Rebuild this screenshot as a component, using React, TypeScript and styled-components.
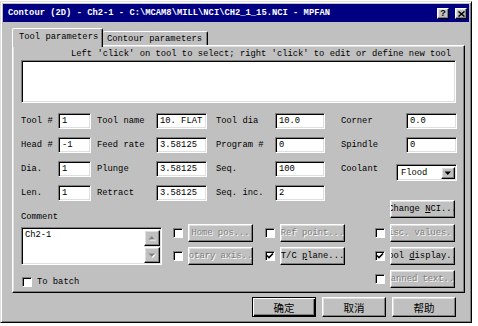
import React from 'react';
import styled, { createGlobalStyle, css } from 'styled-components';

const FACE = '#c0c0c0';
const MONO = `"Liberation Mono", "Courier New", monospace`;
const CJK = `"Noto Sans CJK SC", "Noto Sans", sans-serif`;

const GlobalStyle = createGlobalStyle`
  html, body { margin: 0; padding: 0; background: #fff; }
  body { font-family: ${MONO}; font-size: 8.8px; color: #000; }
  * { box-sizing: border-box; }
`;

const raised = css`
  background: ${FACE};
  border: 1px solid;
  border-color: #fff #000 #000 #fff;
  box-shadow: inset -1px -1px 0 #808080, inset 1px 1px 0 #dfdfdf;
`;

const sunken = css`
  background: #fff;
  border: 1px solid;
  border-color: #808080 #fff #fff #808080;
  box-shadow: inset 1px 1px 0 #000, inset -1px -1px 0 #dfdfdf;
`;

const Window = styled.div`
  margin-top: 1px;
  width: 472px;
  height: 322px;
  background: ${FACE};
  border: 1px solid;
  border-color: #dfdfdf #000 #000 #dfdfdf;
  box-shadow: inset 1px 1px 0 #fff, inset -1px -1px 0 #808080;
  padding: 2px;
  display: flex;
  flex-direction: column;
`;

const TitleBar = styled.div`
  height: 18px;
  background: #000080;
  color: #fff;
  font-weight: bold;
  display: flex;
  align-items: center;
  justify-content: space-between;
  padding: 0 2px 0 5px;
`;

const TitleText = styled.span`
  white-space: nowrap;
  line-height: 12px;
`;

const CaptionButtons = styled.div`
  display: flex;
  gap: 6px;
  margin-top: 1px;
`;

const CaptionButton = styled.div`
  ${raised};
  width: 12px;
  height: 11px;
  display: flex;
  align-items: center;
  justify-content: center;
  color: #000;
  font-family: "Liberation Sans", sans-serif;
  font-size: 9px;
  font-weight: bold;
  line-height: 9px;
`;

const TabStrip = styled.div`
  margin-top: 6px;
  height: 17px;
  padding-left: 9px;
  display: flex;
  align-items: flex-end;
  position: relative;
  z-index: 1;
`;

const Tab = styled.div<{ $active?: boolean }>`
  background: ${FACE};
  border-top: 1px solid #fff;
  border-left: 1px solid #fff;
  border-right: 1px solid #000;
  box-shadow: inset -1px 0 0 #808080;
  border-radius: 2px 2px 0 0;
  white-space: nowrap;
  line-height: 12px;
  ${(p) =>
    p.$active
      ? css`
          height: 19px;
          margin-bottom: -2px;
          width: 91px;
          padding: 2px 0 0 6px;
        `
      : css`
          height: 14px;
          width: 105px;
          padding: 1px 0 0 4px;
          border-left: none;
        `}
`;

const Panel = styled.div`
  margin-left: 9px;
  width: 453px;
  height: 248px;
  background: ${FACE};
  border: 1px solid;
  border-color: #fff #000 #000 #fff;
  box-shadow: inset -1px -1px 0 #808080, inset 1px 1px 0 #dfdfdf;
  padding: 3px 0 0 8px;
  display: flex;
  flex-direction: column;
`;

const Hint = styled.div`
  line-height: 11px;
  height: 11px;
  padding-left: 50px;
  white-space: nowrap;
`;

const ToolList = styled.div`
  ${sunken};
  width: 435px;
  height: 43px;
`;

const Fields = styled.div`
  margin-top: 10px;
  display: flex;
  flex-direction: column;
  gap: 8px;
`;

const FieldRow = styled.div`
  display: flex;
  height: 16px;
`;

const Field = styled.div<{ $w: number; $indent: number }>`
  width: ${(p) => p.$w}px;
  padding-left: ${(p) => p.$indent}px;
  display: flex;
  align-items: flex-start;
  justify-content: space-between;
`;

const Label = styled.span`
  line-height: 16px;
  white-space: nowrap;
`;

const Input = styled.div<{ $w: number }>`
  ${sunken};
  width: ${(p) => p.$w}px;
  height: 16px;
  padding: 1px 0 0 3px;
  line-height: 13px;
  white-space: nowrap;
  overflow: hidden;
`;

const Select = styled.div`
  ${sunken};
  width: 61px;
  height: 17px;
  margin-top: 3px;
  display: flex;
  align-items: stretch;
  padding: 2px 1px 1px 2px;
`;

const SelectValue = styled.span`
  flex: 1;
  line-height: 12px;
  padding-left: 2px;
`;

const DropButton = styled.div`
  ${raised};
  width: 14px;
  display: flex;
  align-items: center;
  justify-content: center;
`;

const Lower = styled.div`
  margin-top: -2px;
  display: grid;
  grid-template-columns: 141px 91px 92px 110px;
  grid-template-rows: 20px 18px 18px 18px;
  row-gap: 5px;
`;

const CommentBlock = styled.div`
  grid-row: 1 / span 3;
  grid-column: 1;
  display: flex;
  flex-direction: column;
  justify-content: flex-end;
  gap: 4px;
`;

const CommentLabel = styled.span`
  line-height: 11px;
`;

const CommentBox = styled.div`
  ${sunken};
  height: 38px;
  display: flex;
  padding: 2px 1px 1px 2px;
`;

const CommentText = styled.div`
  flex: 1;
  line-height: 11px;
  padding-left: 1px;
`;

const ScrollBar = styled.div`
  width: 16px;
  display: flex;
  flex-direction: column;
  justify-content: space-between;
  background: #e0e0e0;
`;

const ScrollButton = styled.div`
  ${raised};
  height: 16px;
  display: flex;
  align-items: center;
  justify-content: center;
`;

const CheckGroup = styled.div<{ $col: number; $row: number }>`
  grid-column: ${(p) => p.$col};
  grid-row: ${(p) => p.$row};
  display: flex;
  align-items: center;
  justify-content: flex-end;
  gap: 5px;
`;

const BatchRow = styled.div`
  grid-column: 1;
  grid-row: 4;
  display: flex;
  align-items: center;
  gap: 5px;
  padding: 5px 0 0 1px;
`;

const CheckBox = styled.div`
  width: 10px;
  height: 10px;
  background: #fff;
  border: 1px solid;
  border-color: #808080 #fff #fff #808080;
  box-shadow: inset 1px 1px 0 #000;
  display: flex;
  align-items: center;
  justify-content: center;
`;

const Button = styled.button<{ $w: number; $h?: number; $disabled?: boolean }>`
  ${raised};
  width: ${(p) => p.$w}px;
  height: ${(p) => p.$h ?? 18}px;
  padding: 0;
  margin: 0;
  display: flex;
  align-items: center;
  justify-content: center;
  overflow: hidden;
  white-space: nowrap;
  font-family: ${MONO};
  font-size: 8.8px;
  color: ${(p) => (p.$disabled ? '#808080' : '#000')};
  text-shadow: ${(p) => (p.$disabled ? '1px 1px 0 #fff' : 'none')};
  cursor: default;
`;

const Footer = styled.div`
  margin-top: 4px;
  display: flex;
  justify-content: flex-end;
  gap: 6px;
  padding-right: 13px;
`;

const DialogButton = styled.button<{ $default?: boolean }>`
  width: 64px;
  height: 20px;
  padding: 0;
  margin: 0;
  background: ${FACE};
  font-family: ${CJK};
  font-size: 10.5px;
  color: #000;
  display: flex;
  align-items: center;
  justify-content: center;
  ${(p) =>
    p.$default
      ? css`
          border: 1px solid #000;
          box-shadow: inset 1px 1px 0 #fff, inset -1px -1px 0 #000, inset -2px -2px 0 #808080;
        `
      : css`
          border: 1px solid;
          border-color: #fff #000 #000 #fff;
          box-shadow: inset -1px -1px 0 #808080, inset 1px 1px 0 #dfdfdf;
        `}
`;

const U = styled.span`
  text-decoration: underline;
`;

const Check = () => (
  <svg width="8" height="8" viewBox="0 0 8 8">
    <path d="M1 3.5 L3 5.5 L7 1.5" stroke="#000" strokeWidth="1.6" fill="none" />
  </svg>
);

const Arrow = ({ dir, color = '#000', shadow }: { dir: 'up' | 'down'; color?: string; shadow?: boolean }) => (
  <svg width="8" height="5" viewBox="0 0 8 5">
    {shadow && (
      <polygon
        points={dir === 'down' ? '1.5,1.5 8,1.5 4.75,5' : '4.75,1 8,4.5 1.5,4.5'}
        fill="#fff"
      />
    )}
    <polygon points={dir === 'down' ? '0.5,0.5 7,0.5 3.75,4' : '3.75,0 7,3.5 0.5,3.5'} fill={color} />
  </svg>
);

type FieldDef = { label: string; value?: string; w: number; iw: number; indent: number; select?: boolean };

const rows: FieldDef[][] = [
  [
    { label: 'Tool #', value: '1', w: 70, iw: 33, indent: 0 },
    { label: 'Tool name', value: '10. FLAT', w: 116, iw: 51, indent: 6 },
    { label: 'Tool dia', value: '10.0', w: 118, iw: 50, indent: 9 },
    { label: 'Corner', value: '0.0', w: 132, iw: 51, indent: 16 },
  ],
  [
    { label: 'Head #', value: '-1', w: 70, iw: 33, indent: 0 },
    { label: 'Feed rate', value: '3.58125', w: 116, iw: 51, indent: 6 },
    { label: 'Program #', value: '0', w: 118, iw: 50, indent: 9 },
    { label: 'Spindle', value: '0', w: 132, iw: 51, indent: 16 },
  ],
  [
    { label: 'Dia.', value: '1', w: 70, iw: 33, indent: 0 },
    { label: 'Plunge', value: '3.58125', w: 116, iw: 51, indent: 6 },
    { label: 'Seq.', value: '100', w: 118, iw: 50, indent: 9 },
    { label: 'Coolant', value: 'Flood', w: 132, iw: 61, indent: 16, select: true },
  ],
  [
    { label: 'Len.', value: '1', w: 70, iw: 33, indent: 0 },
    { label: 'Retract', value: '3.58125', w: 116, iw: 51, indent: 6 },
    { label: 'Seq. inc.', value: '2', w: 118, iw: 50, indent: 9 },
  ],
];

type CB = { text: React.ReactNode; checked?: boolean; disabled?: boolean; col: number; row: number };

const checkButtons: CB[] = [
  { text: 'Home pos...', disabled: true, col: 2, row: 2 },
  { text: 'Ref point...', disabled: true, col: 3, row: 2 },
  { text: 'Misc. values...', disabled: true, col: 4, row: 2 },
  { text: 'Rotary axis...', disabled: true, col: 2, row: 3 },
  { text: <>T/C <U>p</U>lane...</>, checked: true, col: 3, row: 3 },
  { text: <>Tool <U>d</U>isplay...</>, checked: true, col: 4, row: 3 },
  { text: 'Canned text...', disabled: true, col: 4, row: 4 },
];

export default function App() {
  return (
    <>
      <GlobalStyle />
      <Window>
        <TitleBar>
          <TitleText>{'Contour (2D) - Ch2-1 - C:\\MCAM8\\MILL\\NCI\\CH2_1_15.NCI - MPFAN'}</TitleText>
          <CaptionButtons>
            <CaptionButton>?</CaptionButton>
            <CaptionButton>
              <svg width="7" height="6" viewBox="0 0 7 6">
                <path d="M0.5 0.5 L6.5 5.5 M6.5 0.5 L0.5 5.5" stroke="#000" strokeWidth="1.5" />
              </svg>
            </CaptionButton>
          </CaptionButtons>
        </TitleBar>

        <TabStrip>
          <Tab $active>Tool parameters</Tab>
          <Tab>Contour parameters</Tab>
        </TabStrip>

        <Panel>
          <Hint>Left 'click' on tool to select; right 'click' to edit or define new tool</Hint>
          <ToolList />

          <Fields>
            {rows.map((r, i) => (
              <FieldRow key={i}>
                {r.map((f) => (
                  <Field key={f.label} $w={f.w} $indent={f.indent}>
                    <Label>{f.label}</Label>
                    {f.select ? (
                      <Select>
                        <SelectValue>{f.value}</SelectValue>
                        <DropButton>
                          <Arrow dir="down" />
                        </DropButton>
                      </Select>
                    ) : (
                      <Input $w={f.iw}>{f.value}</Input>
                    )}
                  </Field>
                ))}
              </FieldRow>
            ))}
          </Fields>

          <Lower>
            <CommentBlock>
              <CommentLabel>Comment</CommentLabel>
              <CommentBox>
                <CommentText>Ch2-1</CommentText>
                <ScrollBar>
                  <ScrollButton>
                    <Arrow dir="up" color="#808080" shadow />
                  </ScrollButton>
                  <ScrollButton>
                    <Arrow dir="down" color="#808080" shadow />
                  </ScrollButton>
                </ScrollBar>
              </CommentBox>
            </CommentBlock>

            <CheckGroup $col={4} $row={1}>
              <Button $w={65}>
                <span>
                  Change <U>N</U>CI...
                </span>
              </Button>
            </CheckGroup>

            {checkButtons.map((b, i) => (
              <CheckGroup key={i} $col={b.col} $row={b.row}>
                <CheckBox>{b.checked && <Check />}</CheckBox>
                <Button $w={65} $disabled={b.disabled}>
                  <span>{b.text}</span>
                </Button>
              </CheckGroup>
            ))}

            <BatchRow>
              <CheckBox />
              <span>To batch</span>
            </BatchRow>
          </Lower>
        </Panel>

        <Footer>
          <DialogButton $default>确定</DialogButton>
          <DialogButton>取消</DialogButton>
          <DialogButton>帮助</DialogButton>
        </Footer>
      </Window>
    </>
  );
}
